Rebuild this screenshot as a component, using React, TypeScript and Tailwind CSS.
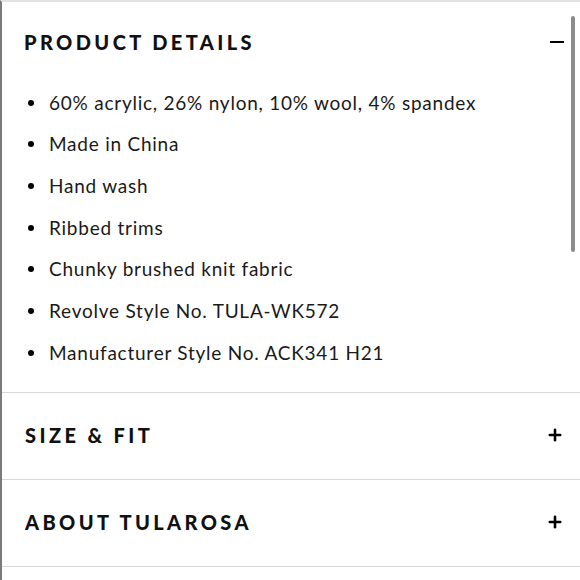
import { Plus } from "lucide-react";

const details = [
    "60% acrylic, 26% nylon, 10% wool, 4% spandex",
    "Made in China",
    "Hand wash",
    "Ribbed trims",
    "Chunky brushed knit fabric",
    "Revolve Style No. TULA-WK572",
    "Manufacturer Style No. ACK341 H21",
];

function Section({ title }: { title: string }) {
    return (
        <div className="h-[87px] border-b-[1.5px] border-[#d9d9d9] flex items-center justify-between pl-[23px] pr-[16px] pb-[1px]">
            <h2 className="text-[20px] font-black tracking-[0.17em] text-[#111]">{title}</h2>
            <Plus className="w-[18px] h-[18px] text-black" strokeWidth={3.4} />
        </div>
    );
}

export default function App() {
    return (
        <div
            className="relative w-[580px] h-[580px] bg-white border-l-2 border-[#7a7a7a] border-t-2 border-t-[#e2e2e2] overflow-hidden"
            style={{ fontFamily: "Lato, 'Open Sans', sans-serif" }}
        >
            {/* Product details, open */}
            <div className="border-b-[1.5px] border-[#d9d9d9]">
                <div className="flex items-center justify-between pl-[22px] pr-[16px] pt-[22px] pb-[22px] h-[80px]">
                    <h2 className="text-[20px] font-black tracking-[0.17em] text-[#111]">PRODUCT DETAILS</h2>
                    <div className="w-[14px] h-[2.5px] bg-black" />
                </div>
                <ul className="pb-[18px]">
                    {details.map((d) => (
                        <li key={d} className="h-[41.67px] flex items-center text-[19px] text-[#1a1a1a] tracking-[0.04em]">
                            <span className="w-[6px] h-[6px] rounded-full bg-black ml-[26px] mr-[15px]" />
                            {d}
                        </li>
                    ))}
                </ul>
            </div>
            <Section title="SIZE & FIT" />
            <Section title="ABOUT TULAROSA" />

            {/* scrollbar */}
            <div className="absolute left-[569px] top-[14px] w-[4px] h-[236px] rounded-full bg-[#8c8c8c]" />
        </div>
    );
}
